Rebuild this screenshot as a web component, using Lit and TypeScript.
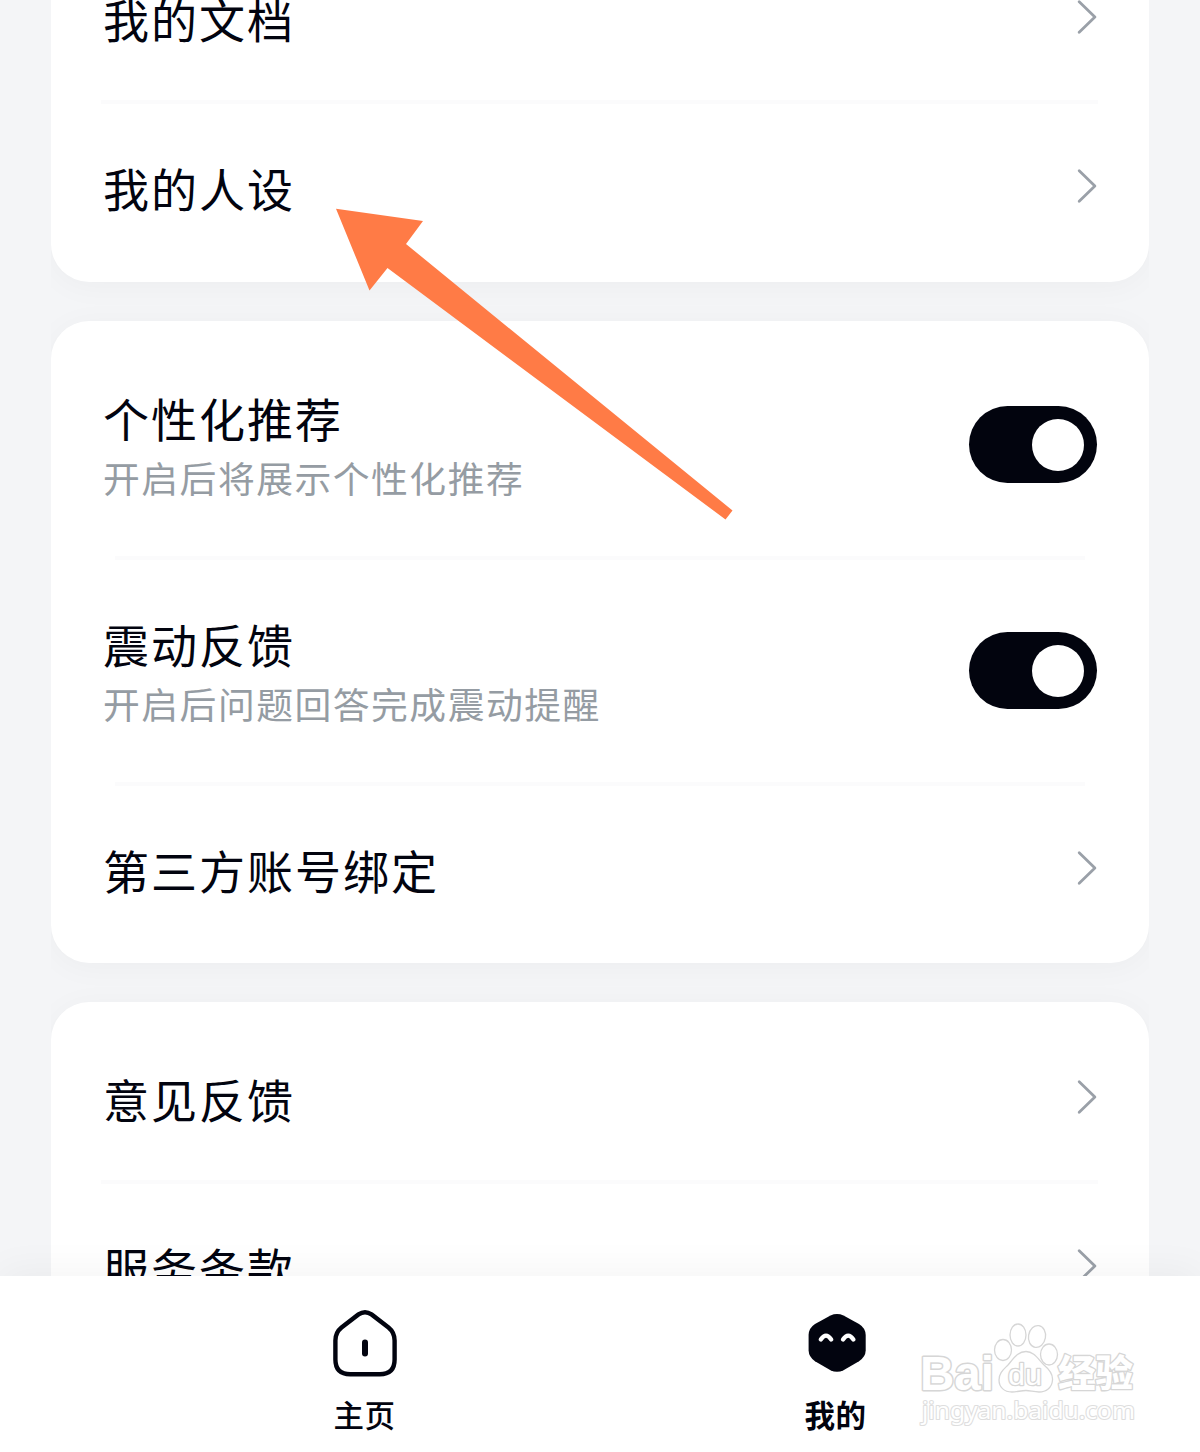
import { LitElement, html, css, nothing } from "lit";
import { customElement, property } from "lit/decorators.js";

@customElement("setting-row")
class SettingRow extends LitElement {
  @property() label = "";
  @property() note = "";

  static styles = css`
    :host {
      display: block;
    }
    .row {
      display: flex;
      align-items: center;
      justify-content: space-between;
      height: 165px;
      padding: 0 52px 0 52px;
    }
    .row.tall {
      height: 222px;
    }
    .label {
      font-size: 46px;
      letter-spacing: 2px;
      line-height: 64px;
      color: #02040f;
    }
    .tall .label {
      line-height: 63px;
    }
    .note {
      font-size: 36.8px;
      letter-spacing: 1.5px;
      line-height: 56px;
      color: #959ca3;
    }
    .toggle {
      box-sizing: border-box;
      display: flex;
      justify-content: flex-end;
      width: 128px;
      height: 77px;
      margin-bottom: 1px;
      padding: 12.5px 12.5px;
      border-radius: 39px;
      background: #02040e;
    }
    .knob {
      width: 52px;
      height: 52px;
      border-radius: 50%;
      background: #fff;
    }
    .chevron {
      display: block;
      width: 22px;
      height: 36px;
      margin-bottom: 1px;
    }
  `;

  render() {
    return html`
      <div class="row ${this.note ? "tall" : ""}">
        <div>
          <div class="label">${this.label}</div>
          ${this.note ? html`<div class="note">${this.note}</div>` : nothing}
        </div>
        ${this.note
          ? html`<div class="toggle"><div class="knob"></div></div>`
          : html`<svg class="chevron" viewBox="0 0 22 36" fill="none" stroke="#9aa0a8" stroke-width="2.8" stroke-linecap="round" stroke-linejoin="round">
              <path d="M4.200 2.800 19.900 18 4.200 33.200" />
            </svg>`}
      </div>
    `;
  }
}

@customElement("app-root")
class AppRoot extends LitElement {
  static styles = css`
    :host {
      display: block;
      font-family: "Noto Sans CJK SC", sans-serif;
    }
    .page {
      position: relative;
      display: flex;
      flex-direction: column;
      height: 1452px;
      overflow: hidden;
      background: #f4f5f7;
    }
    .list {
      flex: 1;
      min-height: 0;
      display: flex;
      flex-direction: column;
      gap: 39px;
      margin: 0 51.5px 0 51px;
      overflow: hidden;
    }
    .card {
      flex: none;
      padding: 13px 0 12px;
      border-radius: 38px;
      background: #fff;
      box-shadow: 0 4px 32px rgba(0, 0, 0, 0.035);
    }
    .card.first {
      margin-top: -78px;
      padding-bottom: 13px;
    }
    .divider {
      height: 4px;
      margin: 0 51px 0 50px;
      background: #fbfbfc;
    }
    .divider.short {
      margin: 0 64px;
    }
    .nav {
      position: relative;
      flex: none;
      display: flex;
      justify-content: center;
      height: 176px;
      background: #fff;
      box-shadow: 0 -6px 36px rgba(0, 0, 0, 0.045);
    }
    .tab {
      width: 471px;
      display: flex;
      flex-direction: column;
      align-items: center;
      padding-top: 30px;
      box-sizing: border-box;
    }
    .icon {
      width: 72px;
      height: 76px;
    }
    .name {
      margin-top: 8px;
      font-size: 30.5px;
      line-height: 48px;
      letter-spacing: 0.5px;
      font-weight: 500;
      color: #02040f;
    }
    .active .name {
      font-weight: 700;
    }
    .arrow {
      position: absolute;
      left: 320px;
      top: 190px;
      width: 430px;
      height: 350px;
    }
    .mark {
      position: absolute;
      left: 910px;
      top: 40px;
      width: 240px;
      height: 120px;
    }
    .mark text {
      font-family: "Liberation Sans", "Noto Sans CJK SC", sans-serif;
      paint-order: stroke;
    }
    .mark .site {
      font-family: "Noto Sans", sans-serif;
    }
    .mark .cjk {
      font-family: "Noto Sans CJK SC", sans-serif;
    }
  `;

  render() {
    return html`
      <div class="page">
        <div class="list">
          <section class="card first">
            <setting-row label="我的文档"></setting-row>
            <div class="divider"></div>
            <setting-row label="我的人设"></setting-row>
          </section>
          <section class="card">
            <setting-row label="个性化推荐" note="开启后将展示个性化推荐"></setting-row>
            <div class="divider short"></div>
            <setting-row label="震动反馈" note="开启后问题回答完成震动提醒"></setting-row>
            <div class="divider short"></div>
            <setting-row label="第三方账号绑定"></setting-row>
          </section>
          <section class="card">
            <setting-row label="意见反馈"></setting-row>
            <div class="divider"></div>
            <setting-row label="服务条款"></setting-row>
          </section>
        </div>

        <nav class="nav">
          <div class="tab">
            <svg class="icon" viewBox="0 0 72 76" fill="none" stroke="#02040f" stroke-width="4.4" stroke-linecap="round">
              <path d="M29.500 8.400Q36 4 42.500 8.400L59.500 21.500Q65.600 26.500 65.600 34.500V53.500Q65.600 68.200 50.800 68.200H21.200Q6.400 68.200 6.400 53.500V34.500Q6.400 26.500 12.500 21.500Z" />
              <path d="M36 36.500V47.500" stroke-width="6" />
            </svg>
            <div class="name">主页</div>
          </div>
          <div class="tab active">
            <svg class="icon" viewBox="0 0 72 76">
              <path d="M30.5 9.4Q37 6.6 43.5 9.4L59 18Q65.5 22 65.7 29V44.500Q65.500 51 59 55.200L43.500 64.200Q37 67.400 30.500 64.200L15 55.200Q8.800 51 8.600 44.500V29Q8.800 22 15 18Z" fill="#02040f" />
              <path d="M20.800 33.500Q26 25.800 31.200 33.500M43 33.500Q48.200 25.800 53.400 33.500" fill="none" stroke="#fff" stroke-width="4.300" stroke-linecap="round" />
            </svg>
            <div class="name">我的</div>
          </div>

          <svg class="mark" viewBox="910 1316 240 120" fill="#fff" stroke="#d6d6d6" stroke-width="1.3" stroke-linejoin="round">
            <text x="920" y="1390" font-size="48" font-weight="700" stroke-width="3" textLength="74" lengthAdjust="spacingAndGlyphs">Bai</text>
            <ellipse cx="1003" cy="1350" rx="8.500" ry="10.500" />
            <ellipse cx="1018" cy="1335" rx="8" ry="11" />
            <ellipse cx="1037" cy="1336.500" rx="8.500" ry="11" transform="rotate(10 1037 1336.500)" />
            <ellipse cx="1049" cy="1354.500" rx="8.500" ry="10.500" />
            <path d="M1026 1351.500C1034 1351.500 1038 1359 1044 1365C1050 1370 1053 1374 1052.500 1380C1052 1388 1046 1392 1039 1392C1034 1392 1030 1390.500 1026 1390.500C1021 1390.500 1017 1392 1012 1392C1004 1392 999 1387 999 1380C999 1373 1003 1370 1008 1365C1014 1358 1018 1351.500 1026 1351.500Z" />
            <text x="1008" y="1384.500" font-size="30" stroke-width="2.600" textLength="34" lengthAdjust="spacingAndGlyphs">du</text>
            <text class="cjk" x="1058" y="1387" font-size="37" font-weight="900" stroke-width="2.600" textLength="75" lengthAdjust="spacingAndGlyphs">经验</text>
            <text class="site" x="922" y="1418.500" font-size="24" stroke="#dedede" stroke-width="2.200" textLength="213" lengthAdjust="spacingAndGlyphs">jingyan.baidu.com</text>
          </svg>
        </nav>

        <svg class="arrow" viewBox="320 190 430 350">
          <path d="M336 208.700 423 221 406 244 732.500 510.500 725.500 519.500 387.500 268 369.500 290.500Z" fill="#ff7b46" />
        </svg>
      </div>
    `;
  }
}
